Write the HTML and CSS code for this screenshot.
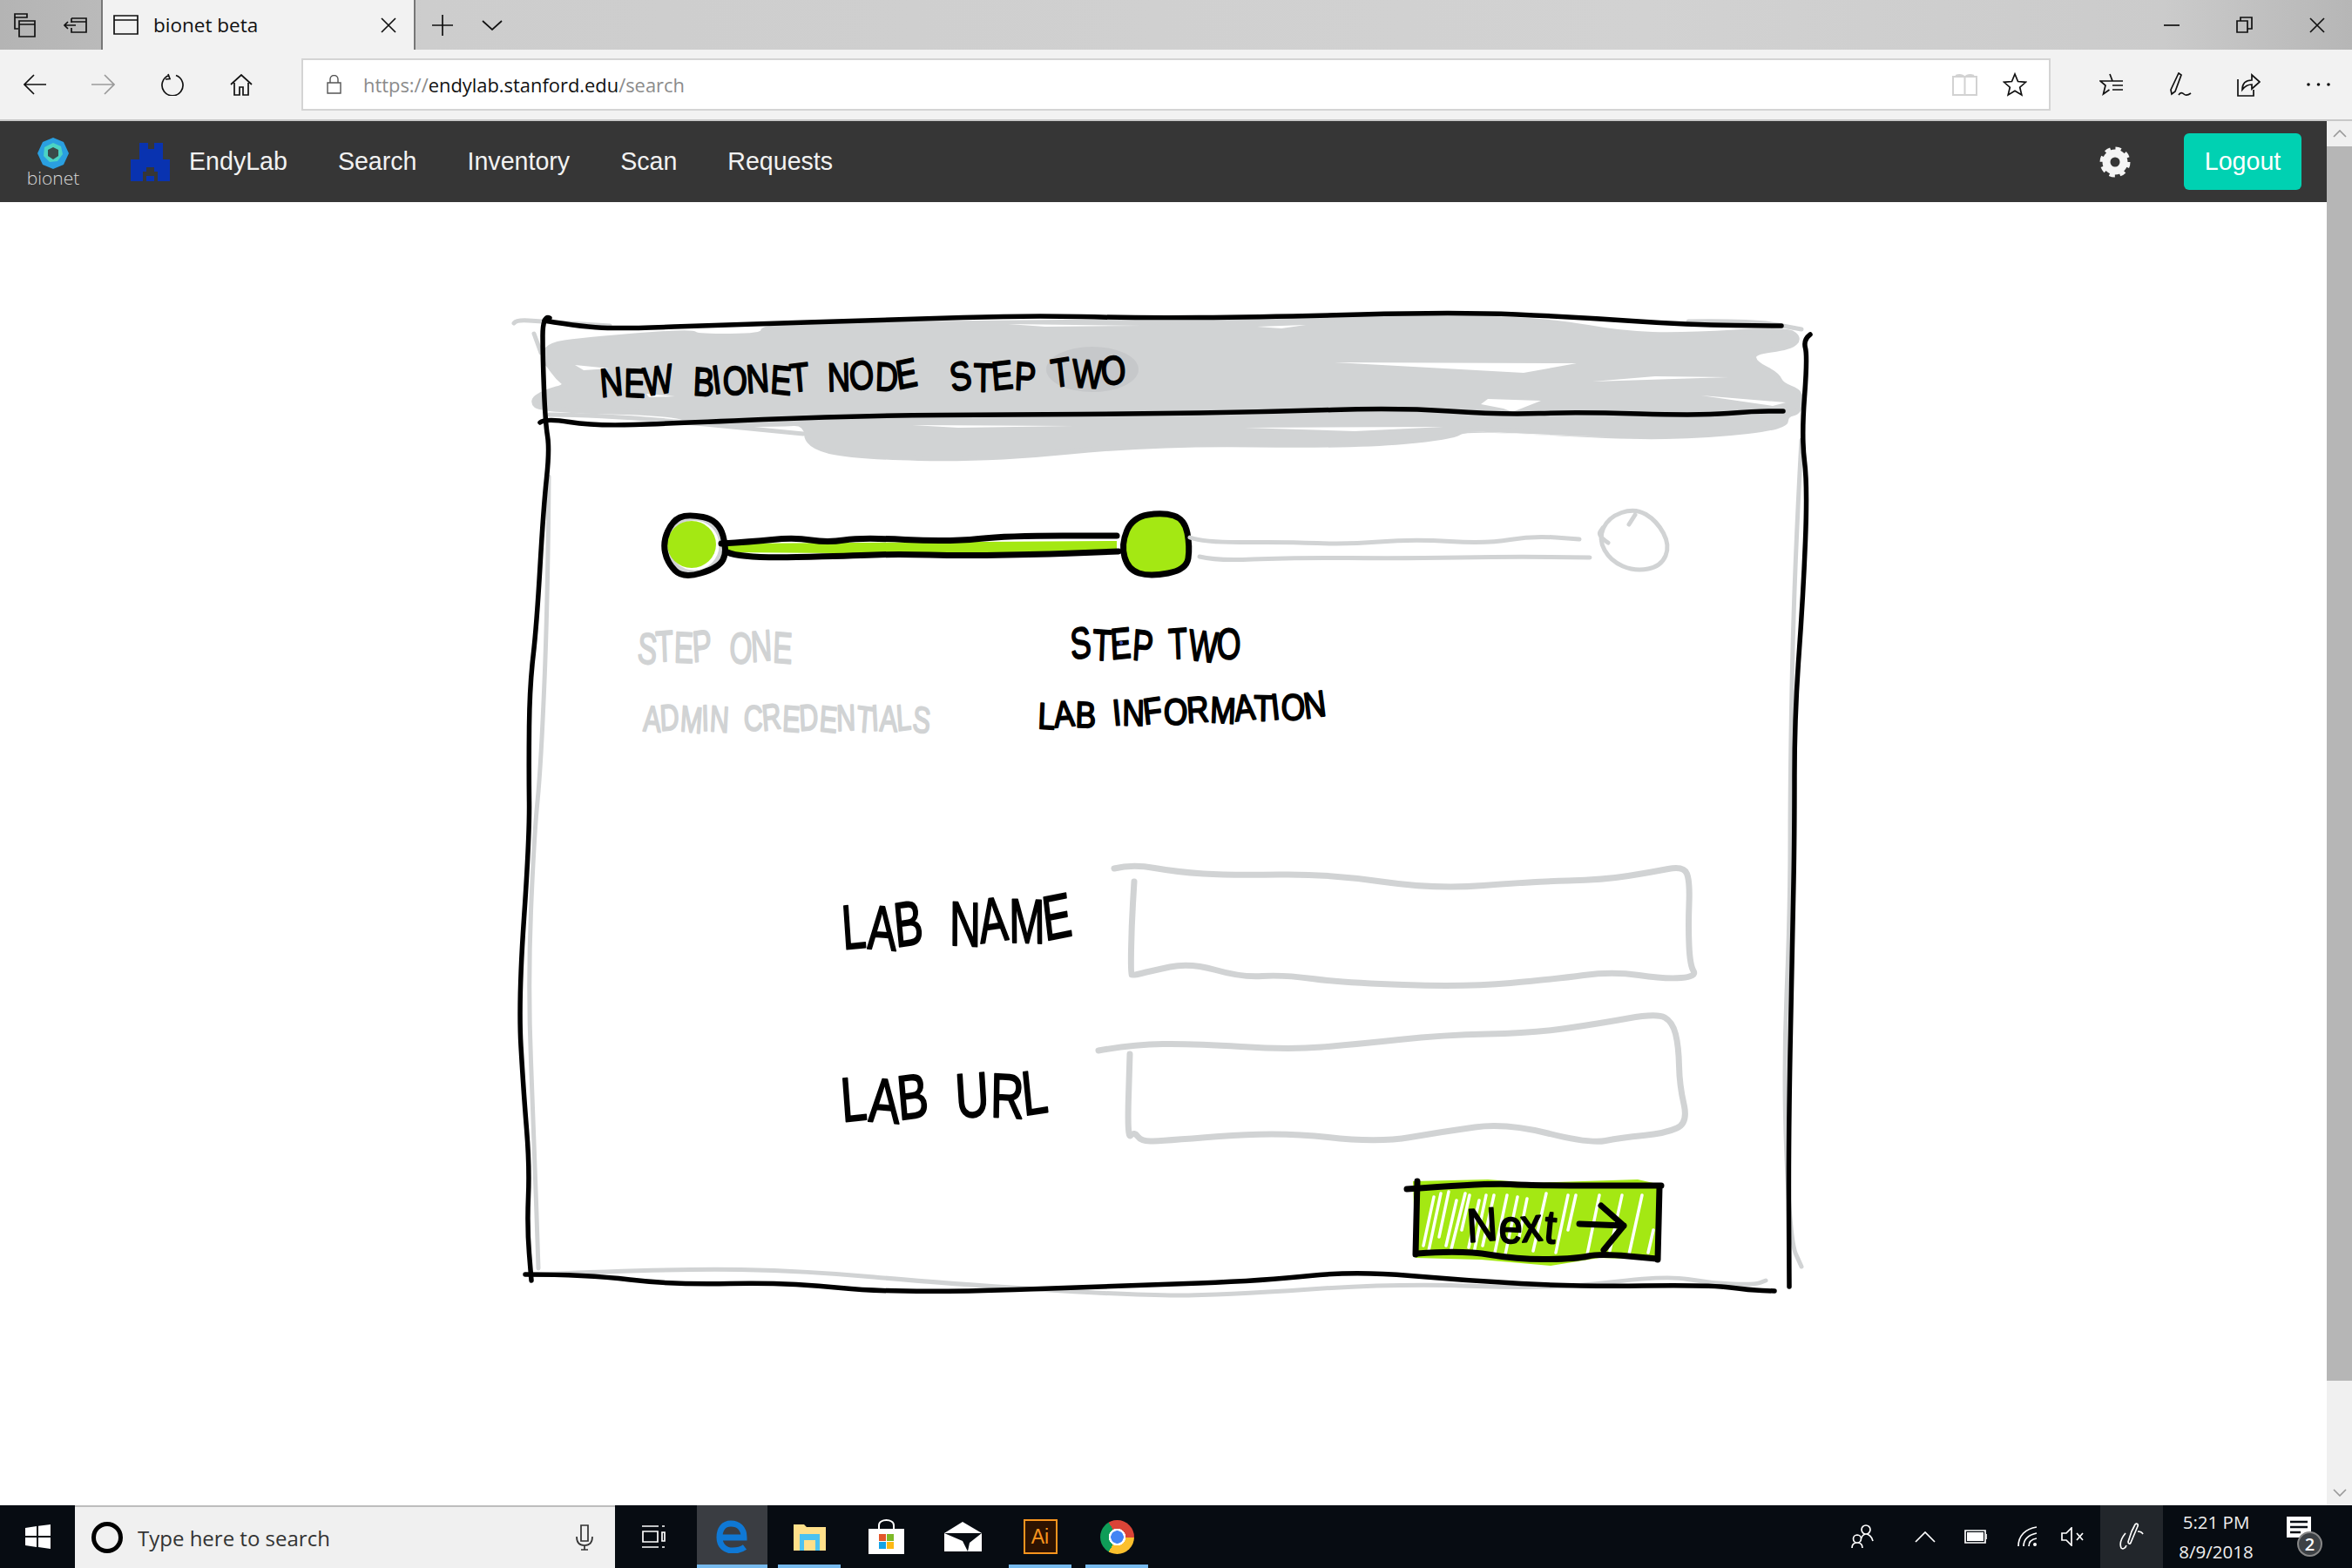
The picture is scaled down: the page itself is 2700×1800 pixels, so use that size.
FILE: index.html
```html
<!DOCTYPE html>
<html lang="en">
<head>
  <meta charset="UTF-8">
  <meta name="viewport" content="width=device-width, initial-scale=1.0">
  <link rel="stylesheet" href="styles.css">
  <title>bionet beta</title>
</head>
<body>
  <div class="tabstrip">
    <div class="tab-tools">
      <svg class="ico" width="26" height="28" viewBox="0 0 26 28"><path d="M1 1h14v4H1zM1 5v13h4M6 9h18v18H6zM6 13h18"/></svg>
      <svg class="ico" width="27" height="18" viewBox="0 0 27 18"><path d="M9 1h17v16H9v-5M9 6V1M9 5h17M1 9h13M5 5L1 9l4 4"/></svg>
    </div>
    <div class="tab">
      <svg class="ico" width="29" height="23" viewBox="0 0 29 23"><path d="M1 1h27v21H1zM1 6h27"/></svg>
      <span class="tab-title">bionet beta</span>
      <svg class="ico tab-close" width="18" height="18" viewBox="0 0 18 18"><path d="M1 1l16 16M17 1L1 17"/></svg>
    </div>
    <svg class="ico tab-plus" width="24" height="24" viewBox="0 0 24 24"><path d="M12 0v24M0 12h24"/></svg>
    <svg class="ico tab-more" width="24" height="12" viewBox="0 0 24 12"><path d="M1 1l11 10L23 1"/></svg>
    <div class="win-buttons">
      <svg class="ico" width="18" height="4" viewBox="0 0 18 4"><path d="M0 2h18"/></svg>
      <svg class="ico" width="19" height="19" viewBox="0 0 19 19"><path d="M1 5h12v13H1zM5 5V1h13v13h-5"/></svg>
      <svg class="ico" width="18" height="18" viewBox="0 0 18 18"><path d="M1 1l16 16M17 1L1 17"/></svg>
    </div>
  </div>

  <div class="toolbar">
    <svg class="ico" width="26" height="24" viewBox="0 0 26 24"><path d="M26 12H1M12 1L1 12l11 11"/></svg>
    <svg class="ico ico-dim" width="27" height="24" viewBox="0 0 27 24"><path d="M0 12h25M15 1l11 11-11 11"/></svg>
    <svg class="ico tool-refresh" width="26" height="26" viewBox="0 0 26 26"><path d="M9 2.500A12 12 0 1 0 17 2.500M8 1l2 5.500-5 .5"/></svg>
    <svg class="ico tool-home" width="26" height="25" viewBox="0 0 26 25"><path d="M1 12L13 1l12 11M5 10v14h6v-9h4v9h6V10"/></svg>
    <div class="urlbar">
      <svg class="ico ico-lock" width="17" height="22" viewBox="0 0 17 22"><path d="M1 9h15v12H1zM4 9V5a4.500 4.500 0 0 1 9 0v4"/></svg>
      <span class="url"><span class="url-dim">https://</span>endylab.stanford.edu<span class="url-dim">/search</span></span>
      <svg class="ico ico-read" width="29" height="25" viewBox="0 0 29 25"><path d="M1 3h27v21H1zM14.500 5v19M4 2c4-1.500 8-1 10.500 2 2.500-3 6.500-3.500 10.500-2"/></svg>
      <svg class="ico" width="28" height="28" viewBox="0 0 28 28"><path d="M14 2l3.500 8.500 9 .8-6.800 5.900 2.100 8.800L14 21.200 6.200 26l2.100-8.800L1.500 11.300l9-.8z"/></svg>
    </div>
    <svg class="ico tool-fav" width="28" height="28" viewBox="0 0 28 28"><path d="M12 2l3 8h-14l6 5-2.500 10 7-5M15 10h12M15 15h12M15 20h12"/></svg>
    <svg class="ico" width="27" height="28" viewBox="0 0 27 28"><path d="M11 1l3 2-7 19-4 3-1-5zM11 26c2-3 4-3 6-1s4 2 8-1"/></svg>
    <svg class="ico tool-share" width="28" height="28" viewBox="0 0 28 28"><path d="M2 8v19h18v-7M7 20c0-8 4-11 11-11V3l9 8-9 8v-5c-5 0-8 2-11 6z"/></svg>
    <svg class="tool-dots" width="27" height="4" viewBox="0 0 27 4"><circle cx="2" cy="2" r="1.800"/><circle cx="13.500" cy="2" r="1.800"/><circle cx="25" cy="2" r="1.800"/></svg>
  </div>

  <div class="viewport">
    <div class="page">
      <nav class="navbar">
        <div class="brand">
          <svg width="36" height="36" viewBox="0 0 36 36">
            <path class="logo-blue" d="M18 0l12 5 6 13-6 13-12 5-12-5-6-13 6-13z"/>
            <path class="logo-teal" d="M18 6l9 4 2 9-6 8-9 1-7-7 1-10z"/>
            <path class="logo-hole" d="M18 11l6 3v7l-6 4-6-4v-7z"/>
          </svg>
          <span class="brand-name">bionet</span>
        </div>
        <svg class="lab-logo" width="45" height="44" viewBox="0 0 45 44"><path fill-rule="evenodd" d="M10 0h10v7h7V0h10v19h8v25H31v-6h-4v6H18v-6h-4v6H0V19h10zM18 28v5h-4v5h17v-5h-4v-5z"/></svg>
        <a class="nav-link lab-name">EndyLab</a>
        <a class="nav-link">Search</a>
        <a class="nav-link">Inventory</a>
        <a class="nav-link">Scan</a>
        <a class="nav-link">Requests</a>
        <svg class="gear" width="36" height="36" viewBox="0 0 36 36">
          <circle class="gear-ring" cx="18" cy="18" r="10"/>
          <circle class="gear-teeth" cx="18" cy="18" r="15"/>
        </svg>
        <a class="logout">Logout</a>
      </nav>

      <main class="sketch">
        <svg class="sketch-art" width="2671" height="1496" viewBox="0 232 2671 1496">
          <!-- grey marker behind the header -->
          <path class="scrub" data-pts="652,392 794,380 800,386 876,386 876,374 1080,371 1370,369 1672,364 1785,369 1861,383 1933,385 2050,378 2066,388 2055,399 2012,404 2014,417 2040,430 2045,442 2068,450 2066,473 2050,476 2050,490 1963,500 1861,502 1683,491 1667,502 1555,512 1325,509 1131,528 978,524 927,512 925,485 896,487 800,487 774,474 621,471 610,460 626,450 652,443 640,433 630,419 622,411 629,398 652,392"/>
          <path class="scrub-gap" d="M660 419L700 423 670 425zM742 452L775 455 745 456zM1047 488L1233 489 1100 491zM1157 372L1310 374 1200 375zM1532 416L1810 417 1749 428zM1828 438L1900 432 1984 433zM1953 454L2050 462 2035 466zM1700 464L1708 458 1769 460 1736 473 1726 469zM1428 491L1657 490 1555 495zM1683 495L1851 502 1760 499zM1443 375L1499 373 1471 377z"/>
          <ellipse class="scrub-dark" cx="1254" cy="424" rx="53" ry="26"/>

          <!-- grey first pass of the frame -->
          <path class="faint" data-pts="590,371 593,367 621,369 700,374"/>
          <path class="faint" data-pts="613,383 621,405"/>
          <path class="faint" data-pts="631,476 697,476 922,498"/>
          <path class="faint" data-pts="630,547 629,684 621,880 613,960 606,1132 613,1304 618,1456"/>
          <path class="faint" data-pts="616,1463 774,1456 927,1459 1080,1473 1300,1487 1402,1487 1606,1473 1785,1480 1912,1464 1963,1473 2014,1475 2027,1470"/>
          <path class="faint" data-pts="2068,505 2060,650 2055,880 2055,1046 2047,1235 2055,1425 2068,1454"/>
          <path class="faint" data-pts="1938,369 2014,368 2068,378"/>

          <!-- black frame -->
          <path class="ink" data-pts="631,365 623,362 623,409 626,485 631,516 624,581 616,719 608,788 607,880 608,960 595,1149 601,1253 608,1339 605,1408 610,1470"/>
          <path class="ink" data-pts="625,368 672,376 723,377 825,373 1029,367 1182,362 1300,365 1453,364 1672,358 1810,364 1938,373 2045,374"/>
          <path class="ink" data-pts="620,485 626,480 682,489 774,486 978,477 1182,476 1300,475 1453,473 1606,468 1723,476 1810,473 1953,477 2014,472 2047,472"/>
          <path class="ink" data-pts="2078,384 2070,390 2075,409 2068,502 2075,557 2070,684 2060,822 2060,960 2058,1063 2053,1304 2054,1477"/>
          <path class="ink" data-pts="603,1463 672,1463 774,1475 902,1472 1029,1485 1300,1476 1453,1470 1555,1459 1683,1470 1810,1477 1963,1475 2009,1481 2037,1482"/>

          <!-- stepper -->
          <ellipse class="ghost" cx="797" cy="626" rx="31" ry="31"/>
          <ellipse class="lime" cx="794" cy="625" rx="28" ry="27"/>
          <path class="lime" d="M825 624L1282 621 1282 631 1080 636 835 634z"/>
          <path class="ink ink-fat" data-pts="789,590 825,597 835,633 825,652 784,664 766,646 761,622 772,598 789,590"/>
          <path class="ink ink-fat" data-pts="828,624 861,622 912,617 950,623 988,617 1090,622 1157,615 1282,615"/>
          <path class="ink ink-fat" data-pts="835,634 851,641 978,638 1029,636 1106,638 1208,636 1284,633"/>
          <path class="ink ink-fat ink-filled" data-pts="1300,594 1335,588 1360,596 1366,628 1362,654 1320,662 1295,654 1287,625 1300,594"/>
          <path class="faint" data-pts="1366,617 1382,623 1479,622 1545,625 1621,619 1708,624 1759,615 1813,619"/>
          <path class="faint" data-pts="1377,639 1397,644 1479,640 1616,641 1734,639 1825,640"/>
          <path class="faint" data-pts="1877,583 1902,598 1917,626 1907,650 1877,656 1849,644 1835,619 1846,594 1877,583"/>
          <path class="faint" data-pts="1846,623 1834,615 1840,606"/>
          <path class="faint" data-pts="1877,591 1870,602"/>

          <!-- handwriting -->
          <text class="pen pen-head" x="690" y="456" textLength="365" lengthAdjust="spacingAndGlyphs" transform="rotate(-1.500 690 456)" rotate="-4 3 -6 0 5 -7 3 -3 6 -4 2 0 -5 4 -8">NEW BIONET NODE</text>
          <text class="pen pen-head" x="1093" y="450" textLength="201" lengthAdjust="spacingAndGlyphs" transform="rotate(-2.500 1093 450)" rotate="-8 4 -3 6 0 -5 5 -3">STEP TWO</text>
          <text class="pen pen-step pen-grey" x="731" y="760" textLength="178" lengthAdjust="spacingAndGlyphs" rotate="6 -3 2 -5 0 4 -4 3">STEP ONE</text>
          <text class="pen pen-sub pen-grey" x="738" y="839" textLength="329" lengthAdjust="spacingAndGlyphs" rotate="3 -4 5 -2 4 -3 0 -6 3 -4 5 -2 6 -4 2 -5 7">ADMIN CREDENTIALS</text>
          <text class="pen pen-step" x="1230" y="757" textLength="195" lengthAdjust="spacingAndGlyphs" rotate="-6 3 -4 5 0 -3 5 -2">STEP TWO</text>
          <text class="pen pen-sub" x="1191" y="836" textLength="333" lengthAdjust="spacingAndGlyphs" transform="rotate(-2 1191 836)" rotate="5 -3 4 0 -4 3 -5 4 -2 5 -4 3 -5 2 -6">LAB INFORMATION</text>
          <text class="pen pen-label" x="968" y="1090" textLength="265" lengthAdjust="spacingAndGlyphs" transform="rotate(-2.500 968 1090)" rotate="-2 5 -4 0 4 -4 3 -6">LAB NAME</text>
          <text class="pen pen-label" x="967" y="1288" textLength="238" lengthAdjust="spacingAndGlyphs" transform="rotate(-2 967 1288)" rotate="-3 5 -4 0 -2 4 -5">LAB URL</text>
          <circle class="pen-dot" cx="1287" cy="738" r="2"/>

          <!-- input boxes -->
          <path class="faint faint-wide" data-pts="1279,997 1300,992 1351,1001 1412,1005 1524,1003 1647,1021 1759,1012 1841,1010 1897,1001 1933,994 1940,1012 1938,1063 1940,1108 1948,1121 1912,1124 1851,1115 1785,1124 1683,1133 1540,1128 1473,1119 1425,1122 1366,1105 1320,1115 1300,1120 1298,1118 1299,1063 1302,1012"/>
          <path class="faint faint-wide" data-pts="1261,1206 1300,1199 1370,1198 1479,1205 1555,1199 1657,1188 1759,1186 1836,1175 1902,1163 1920,1173 1927,1201 1928,1246 1938,1289 1912,1301 1861,1306 1825,1313 1729,1289 1657,1299 1581,1312 1468,1299 1331,1310 1310,1310 1302,1299 1294,1308 1297,1210"/>

          <!-- next button -->
          <path class="lime" d="M1622 1356L1708 1354 1759 1358 1880 1354 1907 1360 1905 1446 1836 1444 1780 1453 1700 1446 1625 1444z"/>
          <path class="hatch" d="M1634 1430l12-56M1640 1436l14-66M1652 1420l11-52M1660 1430l12-52M1666 1434l16-64M1678 1412l9-40M1686 1432l12-54M1692 1438l14-66M1702 1430l13-58M1716 1438l14-66M1728 1440l14-66M1744 1420l9-44M1760 1436l15-66M1786 1438l14-66M1800 1412l9-40M1822 1440l14-68M1848 1436l14-64M1870 1440l15-68M1892 1438l6-26"/>
          <path class="ink ink-fat" data-pts="1615,1365 1708,1358 1759,1361 1907,1361"/>
          <path class="ink ink-fat" data-pts="1627,1356 1625,1440"/>
          <path class="ink ink-fat" data-pts="1905,1363 1903,1446"/>
          <path class="ink ink-fat" data-pts="1627,1439 1678,1435 1744,1446 1810,1445 1836,1439 1902,1445"/>
          <text class="pen pen-next" x="1685" y="1426" textLength="100" lengthAdjust="spacingAndGlyphs" rotate="-4 3 -5 6">Next</text>
          <path class="ink ink-fat" d="M1813 1405L1864 1407M1838 1384L1864 1407 1841 1435"/>
        </svg>
      </main>
    </div>
    <div class="scrollbar">
      <div class="scroll-btn"><svg class="ico ico-dim" width="16" height="9" viewBox="0 0 16 9"><path d="M1 8l7-7 7 7"/></svg></div>
      <div class="scroll-thumb"></div>
      <div class="scroll-track"></div>
      <div class="scroll-btn"><svg class="ico ico-dim" width="16" height="9" viewBox="0 0 16 9"><path d="M1 1l7 7 7-7"/></svg></div>
    </div>
  </div>

  <footer class="taskbar">
    <div class="start">
      <svg width="29" height="28" viewBox="0 0 29 28"><path d="M0 4l13-2v11H0zM15 1.700L29 0v13H15zM0 15h13v11L0 24zM15 15h14v13l-14-2z"/></svg>
    </div>
    <div class="searchbox">
      <span class="cortana"></span>
      <span class="search-text">Type here to search</span>
      <svg class="ico mic" width="22" height="30" viewBox="0 0 22 30"><path d="M7 1h8v18H7zM2 14c0 7 3 10 9 10s9-3 9-10M11 24v5M7 29h8"/></svg>
    </div>
    <div class="task-slot slot-view">
      <svg class="ico ico-white" width="28" height="28" viewBox="0 0 28 28"><path d="M1 2h19M1 26h19M2 8h17v12H2zM24 9h3v10h-3zM24 2h3M24 26h3"/></svg>
    </div>
    <div class="task-slot slot-edge is-open is-active">
      <svg class="edge-e" width="37" height="38" viewBox="0 0 37 38"><path d="M4 20h28C32 9 25 4 17 4 9 4 4 10 4 20c0 10 7 15 15 15 5 0 10-1 14-4"/></svg>
    </div>
    <div class="task-slot is-open">
      <svg width="37" height="32" viewBox="0 0 37 32">
        <path class="folder-back" d="M0 2h12l3 3h22v27H0z"/>
        <path class="folder-door" d="M7 13h23v19h-5V20H12v12H7z"/>
      </svg>
    </div>
    <div class="task-slot">
      <svg width="41" height="40" viewBox="0 0 41 40">
        <path class="store-handle" d="M12 12V7c0-8 17-8 17 0v5"/>
        <path class="store-bag" d="M0 11h41v29H0z"/>
        <path class="store-red" d="M12 17h8v8h-8z"/>
        <path class="store-green" d="M21 17h8v8h-8z"/>
        <path class="store-blue" d="M12 26h8v8h-8z"/>
        <path class="store-yellow" d="M21 26h8v8h-8z"/>
      </svg>
    </div>
    <div class="task-slot slot-mail">
      <svg width="43" height="34" viewBox="0 0 43 34">
        <path class="mail-back" d="M21 0l22 13v21H0V13z"/>
        <path class="mail-fold" d="M0 13h43L29 24l-2 10-6-12z"/>
      </svg>
    </div>
    <div class="task-slot slot-ai is-open">
      <span class="ai-badge">Ai</span>
    </div>
    <div class="task-slot is-open">
      <span class="chrome-ball"></span>
    </div>
    <div class="tray">
      <svg class="ico ico-white tray-people" width="26" height="28" viewBox="0 0 26 28"><path d="M17 1a5 5 0 0 1 0 10 5 5 0 0 1 0-10M11 18c1-4 3-7 6-7s7 3 8 8M7 12a4.500 4.500 0 0 1 0 9 4.500 4.500 0 0 1 0-9M1 27c0-4 2-6 6-6s6 2 6 6"/></svg>
      <svg class="ico ico-white tray-caret" width="24" height="13" viewBox="0 0 24 13"><path d="M1 12L12 1l11 11"/></svg>
      <svg class="ico ico-white tray-battery" width="26" height="16" viewBox="0 0 26 16"><path class="battery-fill" d="M3 3h19v10H3z"/><path d="M1 1h23v14H1zM26 5v6"/></svg>
      <svg class="ico ico-white tray-wifi" width="24" height="24" viewBox="0 0 24 24"><path d="M1 23C1 11 9 3 22 1M7 23c0-8 6-13 15-15M13 23c0-5 3-8 9-9"/><circle class="wifi-dot" cx="20" cy="21" r="2"/></svg>
      <svg class="ico ico-white tray-volume" width="26" height="22" viewBox="0 0 26 22"><path d="M1 7h5l6-6v20l-6-6H1zM18 7l7 8M25 7l-7 8"/></svg>
      <div class="tray-pen">
        <svg class="ico ico-white" width="30" height="32" viewBox="0 0 30 32"><path d="M15 10L19 2c2-2 4 0 3 2l-8 19c-1 2-3 1-3-1zM8 12c-5 6-7 12-5 17 2 2 5 0 6-3M22 10c3 0 5 1 6 3"/></svg>
      </div>
      <div class="clock">
        <span>5:21 PM</span>
        <span>8/9/2018</span>
      </div>
      <div class="notify">
        <svg width="28" height="24" viewBox="0 0 28 24"><path class="notify-page" d="M0 0h28v24H0z"/><path class="notify-lines" d="M4 6h20M4 12h20M4 18h12"/></svg>
        <span class="notify-count">2</span>
      </div>
    </div>
  </footer>
  <script src="sketch.js"></script>
</body>
</html>
```

FILE: styles.css
```css
* {
  box-sizing: border-box;
}

body {
  margin: 0;
  width: 2700px;
  height: 1800px;
  overflow: hidden;
  display: flex;
  flex-direction: column;
  background-color: white;
  font-family: "Open Sans", "Noto Sans", sans-serif;
}

svg {
  display: block;
  flex: none;
}

.ico {
  fill: none;
  stroke: #111;
  stroke-width: 1.7;
}

.ico-dim {
  stroke: #9a9a9a;
}

.ico-white {
  stroke: white;
}

/* tab strip */
.tabstrip {
  display: flex;
  align-items: center;
  height: 57px;
  background: linear-gradient(90deg, #b4b4b4 0, #cdcdcd 18%, #d2d2d2 70%, #cbcbcb 92%, #b6b6b6 100%);
}

.tab-tools {
  display: flex;
  align-items: center;
  gap: 31px;
  width: 116px;
  padding-left: 16px;
}

.tab {
  display: flex;
  align-items: center;
  width: 361px;
  height: 57px;
  padding: 0 20px 0 12px;
  background-color: #f2f2f2;
  border-left: 2px solid #777;
  border-right: 2px solid #777;
}

.tab-title {
  margin-left: 17px;
  font-size: 22.500px;
  color: #111;
}

.tab-close {
  margin-left: auto;
}

.tab-plus {
  margin-left: 19px;
}

.tab-more {
  margin-left: 33px;
}

.win-buttons {
  display: flex;
  align-items: center;
  gap: 65px;
  margin-left: auto;
  padding-right: 31px;
}

/* address row */
.toolbar {
  display: flex;
  align-items: center;
  gap: 52px;
  height: 82px;
  padding-left: 27px;
  background-color: #f2f2f2;
  border-bottom: 2px solid #c8c8c8;
}

.tool-refresh,
.tool-home {
  margin-left: 1px;
}

.urlbar {
  display: flex;
  align-items: center;
  width: 2008px;
  height: 60px;
  margin-left: 4px;
  padding: 0 25px 0 27px;
  background-color: white;
  border: 2px solid #d4d4d4;
}

.ico-lock {
  stroke: #555;
  stroke-width: 1.400;
}

.url {
  margin-left: 25px;
  font-size: 21.900px;
  color: #111;
}

.url-dim {
  color: #8b8b8b;
}

.ico-read {
  margin-left: auto;
  margin-right: 29px;
  stroke: #d2d2d2;
  stroke-width: 2;
}

.tool-fav {
  margin-left: 4px;
}

.tool-share {
  margin-left: -2px;
}

.tool-dots {
  margin-left: 1px;
  fill: #111;
}

/* page inside the browser */
.viewport {
  flex: 1;
  display: flex;
  min-height: 0;
}

.page {
  flex: 1;
  display: flex;
  flex-direction: column;
  min-width: 0;
}

.navbar {
  display: flex;
  align-items: center;
  flex: none;
  height: 93px;
  padding: 0 29px 0 30px;
  background-color: #363636;
}

.brand {
  display: flex;
  flex-direction: column;
  align-items: center;
  width: 62px;
}

.brand-name {
  margin-top: 1px;
  font-size: 21px;
  font-weight: 300;
  line-height: 18px;
  color: #d6d6d6;
}

.logo-blue {
  fill: #2a9fe0;
}

.logo-teal {
  fill: #4bd3c4;
}

.logo-hole {
  fill: #3a4a4a;
}

.lab-logo {
  margin-left: 58px;
  fill: #0933b0;
}

.nav-link {
  margin-left: 58px;
  font-family: "Liberation Sans", Arial, sans-serif;
  font-size: 28.600px;
  color: #f2f2f2;
}

.lab-name {
  margin-left: 22px;
}

.gear {
  margin-left: auto;
}

.gear-ring {
  fill: none;
  stroke: #f5f5f5;
  stroke-width: 9;
}

.gear-teeth {
  fill: none;
  stroke: #f5f5f5;
  stroke-width: 5;
  stroke-dasharray: 6.200 5.580;
}

.logout {
  margin-left: 61px;
  width: 135px;
  height: 65px;
  line-height: 65px;
  text-align: center;
  font-family: "Liberation Sans", Arial, sans-serif;
  font-size: 28.600px;
  color: white;
  background-color: #00d1b2;
  border-radius: 6px;
}

.sketch {
  flex: 1;
  min-height: 0;
}

/* the drawing */
.scrub {
  fill: #d1d3d4;
  stroke: #d1d3d4;
  stroke-width: 6;
  stroke-linejoin: round;
}

.scrub-gap {
  fill: white;
}

.scrub-dark {
  fill: #c6c8ca;
}

.faint {
  fill: none;
  stroke: #d1d3d4;
  stroke-width: 5;
  stroke-linecap: round;
  stroke-linejoin: round;
}

.faint-wide {
  stroke-width: 7;
}

.ink {
  fill: none;
  stroke: black;
  stroke-width: 5.500;
  stroke-linecap: round;
  stroke-linejoin: round;
}

.ink-fat {
  stroke-width: 7;
}

.ink-filled {
  fill: #a4e813;
}

.ghost {
  fill: none;
  stroke: #d1d3d4;
  stroke-width: 5;
}

.lime {
  fill: #a4e813;
}

.hatch {
  fill: none;
  stroke: white;
  stroke-width: 3.500;
  stroke-linecap: round;
}

.pen {
  font-family: "Liberation Sans Narrow", "Liberation Sans", sans-serif;
  word-spacing: 0.300em;
  fill: black;
  stroke: black;
  stroke-width: 2;
  stroke-linejoin: round;
}

.pen-grey {
  fill: #d1d3d4;
  stroke: #d1d3d4;
}

.pen-head {
  font-size: 46px;
}

.pen-step {
  font-size: 50px;
}

.pen-sub {
  font-size: 42px;
}

.pen-label {
  font-size: 72px;
}

.pen-next {
  font-size: 54px;
}

.pen-dot {
  fill: #4a5fc9;
}

/* scrollbar */
.scrollbar {
  display: flex;
  flex-direction: column;
  flex: none;
  width: 29px;
  background-color: #f0f0f0;
}

.scroll-btn {
  display: flex;
  align-items: center;
  justify-content: center;
  flex: none;
  height: 29px;
}

.scroll-thumb {
  flex: none;
  height: 1417px;
  background-color: #b6b6b6;
}

.scroll-track {
  flex: 1;
}

/* taskbar */
.taskbar {
  display: flex;
  align-items: center;
  flex: none;
  height: 72px;
  background-color: #070c12;
}

.start {
  display: flex;
  align-items: center;
  justify-content: center;
  width: 86px;
  height: 72px;
  fill: white;
}

.searchbox {
  display: flex;
  align-items: center;
  width: 620px;
  height: 72px;
  padding: 0 24px 0 19px;
  background-color: #f0f0f0;
  border-top: 2px solid #bdbdbd;
}

.cortana {
  width: 36px;
  height: 36px;
  border: 5px solid black;
  border-radius: 50%;
}

.search-text {
  margin-left: 17px;
  font-size: 24px;
  color: #333;
}

.mic {
  margin-left: auto;
  stroke: #333;
}

.task-slot {
  position: relative;
  display: flex;
  align-items: center;
  justify-content: center;
  flex: none;
  width: 72px;
  height: 72px;
  margin-left: 16px;
}

.task-slot.is-open::after {
  content: "";
  position: absolute;
  left: 0;
  right: 0;
  bottom: 0;
  height: 4px;
  background-color: #76b9ed;
}

.slot-view {
  width: 87px;
  margin-left: 0;
}

.slot-edge {
  width: 81px;
  margin-left: 7px;
}

.task-slot.is-active {
  background-color: #3a3d42;
}

.slot-edge + .task-slot {
  margin-left: 12px;
}

.slot-ai {
  margin-left: 17px;
}

.edge-e {
  fill: none;
  stroke: #0f78d4;
  stroke-width: 7;
}

.folder-back {
  fill: #ffe08a;
}

.folder-door {
  fill: #4cc2f0;
}

.store-handle {
  fill: none;
  stroke: white;
  stroke-width: 2;
}

.store-bag {
  fill: white;
}

.store-red {
  fill: #e3572b;
}

.store-green {
  fill: #7db928;
}

.store-blue {
  fill: #16a3e6;
}

.store-yellow {
  fill: #fdb813;
}

.mail-back {
  fill: white;
}

.mail-fold {
  fill: #070c12;
}

.ai-badge {
  width: 39px;
  height: 40px;
  line-height: 36px;
  text-align: center;
  font-family: "Liberation Sans", Arial, sans-serif;
  font-size: 23px;
  color: #f7941e;
  background-color: #2d1200;
  border: 2px solid #f7941e;
}

.chrome-ball {
  width: 39px;
  height: 39px;
  border-radius: 50%;
  background:
    radial-gradient(circle, #4285f4 0 7px, white 7.500px 9.500px, transparent 10px),
    conic-gradient(from -30deg, #db4437 0 120deg, #fbc02d 120deg 240deg, #0f9d58 240deg 360deg);
}

.tray {
  display: flex;
  align-items: center;
  height: 72px;
  margin-left: auto;
  padding-right: 45px;
}

.tray-caret {
  margin-left: 47px;
}

.tray-battery {
  margin-left: 33px;
}

.battery-fill {
  fill: white;
  stroke: none;
}

.tray-wifi {
  margin-left: 35px;
}

.wifi-dot {
  fill: white;
  stroke: none;
}

.tray-volume {
  margin-left: 26px;
}

.tray-pen {
  display: flex;
  align-items: center;
  justify-content: center;
  width: 72px;
  height: 72px;
  margin-left: 19px;
  background-color: #22262b;
}

.clock {
  display: flex;
  flex-direction: column;
  align-items: center;
  gap: 10px;
  width: 122px;
  font-size: 20.500px;
  line-height: 24px;
  color: #f0f0f0;
}

.notify {
  position: relative;
  margin-left: 20px;
  width: 30px;
  height: 46px;
}

.notify-page {
  fill: white;
}

.notify-lines {
  stroke: #070c12;
  stroke-width: 2.500;
}

.notify-count {
  position: absolute;
  left: 12px;
  top: 17px;
  width: 29px;
  height: 29px;
  line-height: 25px;
  text-align: center;
  font-size: 20px;
  font-weight: 600;
  color: white;
  background-color: #3d4145;
  border: 2px solid #888;
  border-radius: 50%;
}
```

FILE: sketch.js
```js
// pen strokes are kept as point lists, smooth them into curves through the midpoints
document.querySelectorAll('path[data-pts]').forEach(function (el) {
  var pts = el.getAttribute('data-pts').trim().split(/\s+/).map(function (s) {
    return s.split(',').map(Number);
  });
  var last = pts.length - 1;
  var closed = pts[0][0] === pts[last][0] && pts[0][1] === pts[last][1];
  function mid(a, b) {
    return (a[0] + b[0]) / 2 + ',' + (a[1] + b[1]) / 2;
  }
  var d = 'M' + (closed ? mid(pts[0], pts[1]) : pts[0]);
  for (var i = 1; i < last; i++) {
    d += ' Q' + pts[i] + ' ' + mid(pts[i], pts[i + 1]);
  }
  if (closed) {
    d += ' Q' + pts[0] + ' ' + mid(pts[0], pts[1]) + 'Z';
  } else {
    d += ' L' + pts[last];
  }
  el.setAttribute('d', d);
});
```
